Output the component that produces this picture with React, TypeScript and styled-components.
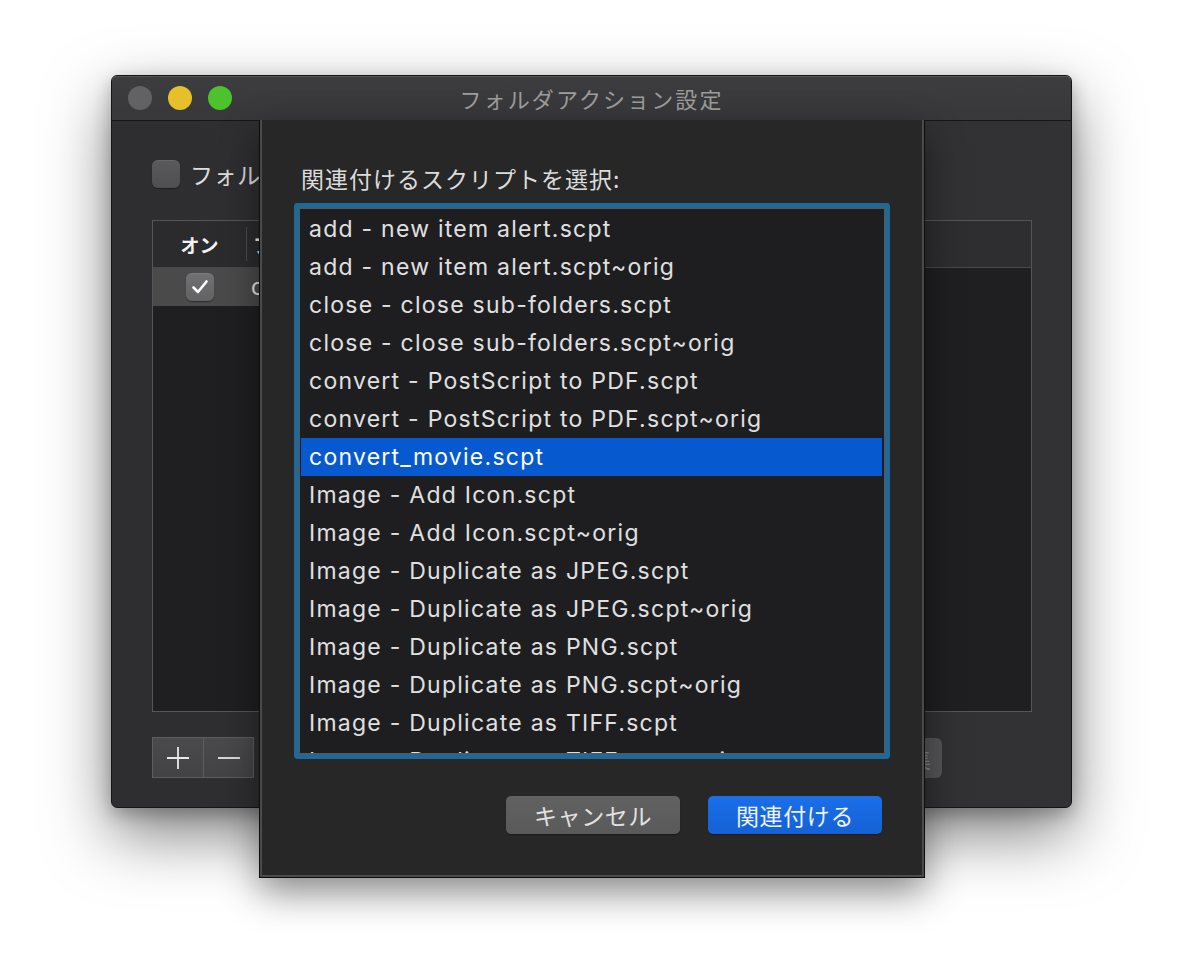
import React from 'react';
import styled, { createGlobalStyle } from 'styled-components';

const Global = createGlobalStyle`
  html, body { margin: 0; padding: 0; background: #ffffff; }
  body { width: 1184px; height: 956px; overflow: hidden; }
  *, *::before, *::after { box-sizing: border-box; }
`;

const JP = `"Noto Sans CJK JP", "Noto Sans", sans-serif`;
const LATIN = `Inter, "Noto Sans CJK JP", sans-serif`;

const Desktop = styled.div`
  width: 1184px;
  height: 956px;
  padding: 75px 0 0 111px;
  background: #ffffff;
  font-family: ${LATIN};
`;

const Window = styled.div`
  position: relative;
  width: 961px;
  height: 733px;
  border-radius: 6px;
  border: 1px solid #151515;
  background: linear-gradient(90deg, #2e2e30, #323234);
  box-shadow: 0 26px 64px rgba(0, 0, 0, 0.5), 0 6px 18px rgba(0, 0, 0, 0.25);
  display: flex;
  flex-direction: column;
`;

const TitleBar = styled.div`
  height: 45px;
  flex: none;
  display: grid;
  grid-template-columns: 1fr auto 1fr;
  align-items: center;
  padding: 0 16px;
  border-bottom: 1px solid #161616;
  border-radius: 5px 5px 0 0;
  background: linear-gradient(#3d3d3f, #38383a);
  box-shadow: inset 0 1px 0 #555557;
`;

const Lights = styled.div`
  display: flex;
  gap: 16px;
`;

const Light = styled.span<{ $c: string }>`
  width: 24px;
  height: 24px;
  border-radius: 50%;
  background: ${(p) => p.$c};
`;

const Title = styled.div`
  font-family: ${JP};
  font-size: 22px;
  letter-spacing: 2.1px;
  color: #9e9e9e;
  line-height: 28px;
`;

const Body = styled.div`
  flex: 1;
  display: flex;
  flex-direction: column;
  padding: 39px 40px 0 40px;
`;

const CheckRow = styled.label`
  display: flex;
  align-items: center;
  gap: 10px;
  height: 28px;
  font-family: ${JP};
  font-size: 23px;
  color: #dddddd;
  letter-spacing: 0.6px;
`;

const Box = styled.span<{ $on?: boolean }>`
  width: 28px;
  height: 28px;
  border-radius: 6px;
  flex: none;
  display: flex;
  align-items: center;
  justify-content: center;
  background: ${(p) => (p.$on ? 'linear-gradient(#717173, #626264)' : 'linear-gradient(#5a5a5c, #4f4f51)')};
  box-shadow: inset 0 1px 0 rgba(255, 255, 255, 0.08), 0 1px 1px rgba(0, 0, 0, 0.4);
`;

const Tables = styled.div`
  margin-top: 32px;
  width: 880px;
  height: 492px;
  border: 1px solid #565658;
  background: #1f1f21;
  display: flex;
`;

const Pane = styled.div<{ $w?: number }>`
  width: ${(p) => (p.$w ? `${p.$w}px` : 'auto')};
  flex: ${(p) => (p.$w ? 'none' : '1')};
  display: flex;
  flex-direction: column;
  & + & {
    border-left: 1px solid #3a3a3c;
  }
`;

const Header = styled.div`
  height: 47px;
  flex: none;
  display: flex;
  align-items: center;
  background: linear-gradient(90deg, #2b2b2d, #2e2e30);
  border-bottom: 1px solid #48484a;
`;

const HeadCell = styled.div<{ $w?: number }>`
  width: ${(p) => (p.$w ? `${p.$w}px` : 'auto')};
  flex: ${(p) => (p.$w ? 'none' : '1')};
  text-align: ${(p) => (p.$w ? 'center' : 'left')};
  padding-left: ${(p) => (p.$w ? '0' : '6px')};
  font-family: ${JP};
  font-size: 19px;
  font-weight: 600;
  color: #f2f2f2;
`;

const HeadSep = styled.span`
  width: 1px;
  height: 34px;
  background: #4e4e50;
`;

const TRow = styled.div`
  height: 38px;
  flex: none;
  display: flex;
  align-items: center;
  background: #4a4a4b;
`;

const TCell = styled.div<{ $w?: number }>`
  width: ${(p) => (p.$w ? `${p.$w}px` : 'auto')};
  flex: ${(p) => (p.$w ? 'none' : '1')};
  display: flex;
  justify-content: ${(p) => (p.$w ? 'center' : 'flex-start')};
  padding-left: ${(p) => (p.$w ? '0' : '5px')};
  font-size: 23px;
  letter-spacing: 1.25px;
  color: #e6e6e6;
  white-space: nowrap;
`;

const BottomBar = styled.div`
  margin-top: 25px;
  display: flex;
  align-items: center;
  height: 41px;
`;

const SegGroup = styled.div`
  display: flex;
  border: 1px solid #5e5e60;
  background: linear-gradient(#4a4a4c, #434345);
`;

const SegBtn = styled.button`
  width: 50px;
  height: 39px;
  border: none;
  padding: 0;
  background: transparent;
  display: flex;
  align-items: center;
  justify-content: center;
  & + & {
    border-left: 1px solid #5e5e60;
  }
`;

const SideButton = styled.button`
  margin-left: auto;
  margin-right: 89px;
  height: 40px;
  padding: 0 11px 0 16px;
  border: none;
  border-radius: 6px;
  background: #555557;
  font-family: ${JP};
  font-size: 22px;
  color: #858585;
`;

const Sheet = styled.div`
  position: absolute;
  left: 147px;
  top: 44px;
  width: 666px;
  height: 758px;
  display: flex;
  flex-direction: column;
  padding: 44px 39px 0 39px;
  background: #272727;
  border: 1px solid #0c0c0c;
  border-top: none;
  box-shadow: inset 2px 0 0 #4b4b4b, inset -2px 0 0 #4b4b4b, inset 0 -2px 0 #4b4b4b,
    0 14px 36px rgba(0, 0, 0, 0.45);
`;

const Prompt = styled.div`
  margin-left: 2px;
  font-family: ${JP};
  font-size: 23px;
  line-height: 28px;
  letter-spacing: 1px;
  color: #dcdcdc;
`;

const List = styled.div`
  margin-top: 16px;
  height: 546px;
  flex: none;
  border: 1px solid #58585a;
  border-radius: 1px;
  background: #1e1e20;
  box-shadow: 0 0 0 5px #216897;
  padding-top: 1px;
  overflow: hidden;
`;

const Item = styled.div<{ $sel?: boolean }>`
  height: 38px;
  margin: 0 2px 0 1px;
  padding-left: 8px;
  display: flex;
  align-items: center;
  font-family: ${LATIN};
  font-size: 23px;
  letter-spacing: 1.25px;
  white-space: nowrap;
  color: ${(p) => (p.$sel ? '#ffffff' : '#e0e0e0')};
  background: ${(p) => (p.$sel ? '#0759d0' : 'transparent')};
`;

const Actions = styled.div`
  margin-top: 42px;
  display: flex;
  justify-content: flex-end;
  gap: 28px;
  padding-right: 3px;
`;

const Btn = styled.button<{ $primary?: boolean }>`
  width: 174px;
  height: 38px;
  border: none;
  border-radius: 5px;
  padding: 0;
  font-family: ${JP};
  font-size: 23px;
  letter-spacing: 0.6px;
  color: ${(p) => (p.$primary ? '#eef3ff' : '#e2e2e2')};
  background: ${(p) => (p.$primary ? 'linear-gradient(#1b6fea, #1461d5)' : 'linear-gradient(#616161, #5a5a5a)')};
  box-shadow: 0 1px 1px rgba(0, 0, 0, 0.35);
`;

const items = [
  'add - new item alert.scpt',
  'add - new item alert.scpt~orig',
  'close - close sub-folders.scpt',
  'close - close sub-folders.scpt~orig',
  'convert - PostScript to PDF.scpt',
  'convert - PostScript to PDF.scpt~orig',
  'convert_movie.scpt',
  'Image - Add Icon.scpt',
  'Image - Add Icon.scpt~orig',
  'Image - Duplicate as JPEG.scpt',
  'Image - Duplicate as JPEG.scpt~orig',
  'Image - Duplicate as PNG.scpt',
  'Image - Duplicate as PNG.scpt~orig',
  'Image - Duplicate as TIFF.scpt',
  'Image - Duplicate as TIFF.scpt~orig',
  'Image - Flip Horizontal.scpt',
];

const Check = () => (
  <svg width="18" height="16" viewBox="0 0 18 16">
    <path d="M2.5 8.5 L7 13 L15.5 2.5" fill="none" stroke="#ffffff" strokeWidth="2.6" strokeLinecap="round" strokeLinejoin="round" />
  </svg>
);

const Plus = () => (
  <svg width="22" height="22" viewBox="0 0 22 22">
    <path d="M11 0 V22 M0 11 H22" stroke="#e8e8e8" strokeWidth="1.8" />
  </svg>
);

const Minus = () => (
  <svg width="22" height="22" viewBox="0 0 22 22">
    <path d="M0 11 H22" stroke="#e8e8e8" strokeWidth="1.8" />
  </svg>
);

export default function App() {
  return (
    <>
      <Global />
      <Desktop>
        <Window>
          <TitleBar>
            <Lights>
              <Light $c="#626265" />
              <Light $c="#e6bf2b" />
              <Light $c="#4cc22d" />
            </Lights>
            <Title>フォルダアクション設定</Title>
            <span />
          </TitleBar>
          <Body>
            <CheckRow>
              <Box />
              フォルダアクションを使用
            </CheckRow>
            <Tables>
              <Pane $w={420}>
                <Header>
                  <HeadCell $w={93}>オン</HeadCell>
                  <HeadSep />
                  <HeadCell>フォルダ</HeadCell>
                </Header>
                <TRow>
                  <TCell $w={93}>
                    <Box $on>
                      <Check />
                    </Box>
                  </TCell>
                  <TCell>convert</TCell>
                </TRow>
              </Pane>
              <Pane>
                <Header>
                  <HeadCell>スクリプト</HeadCell>
                </Header>
              </Pane>
            </Tables>
            <BottomBar>
              <SegGroup>
                <SegBtn aria-label="追加">
                  <Plus />
                </SegBtn>
                <SegBtn aria-label="削除">
                  <Minus />
                </SegBtn>
              </SegGroup>
              <SideButton>スクリプトを編集</SideButton>
            </BottomBar>
          </Body>
          <Sheet>
            <Prompt>関連付けるスクリプトを選択:</Prompt>
            <List>
              {items.map((t) => (
                <Item key={t} $sel={t === 'convert_movie.scpt'}>
                  {t}
                </Item>
              ))}
            </List>
            <Actions>
              <Btn>キャンセル</Btn>
              <Btn $primary>関連付ける</Btn>
            </Actions>
          </Sheet>
        </Window>
      </Desktop>
    </>
  );
}
